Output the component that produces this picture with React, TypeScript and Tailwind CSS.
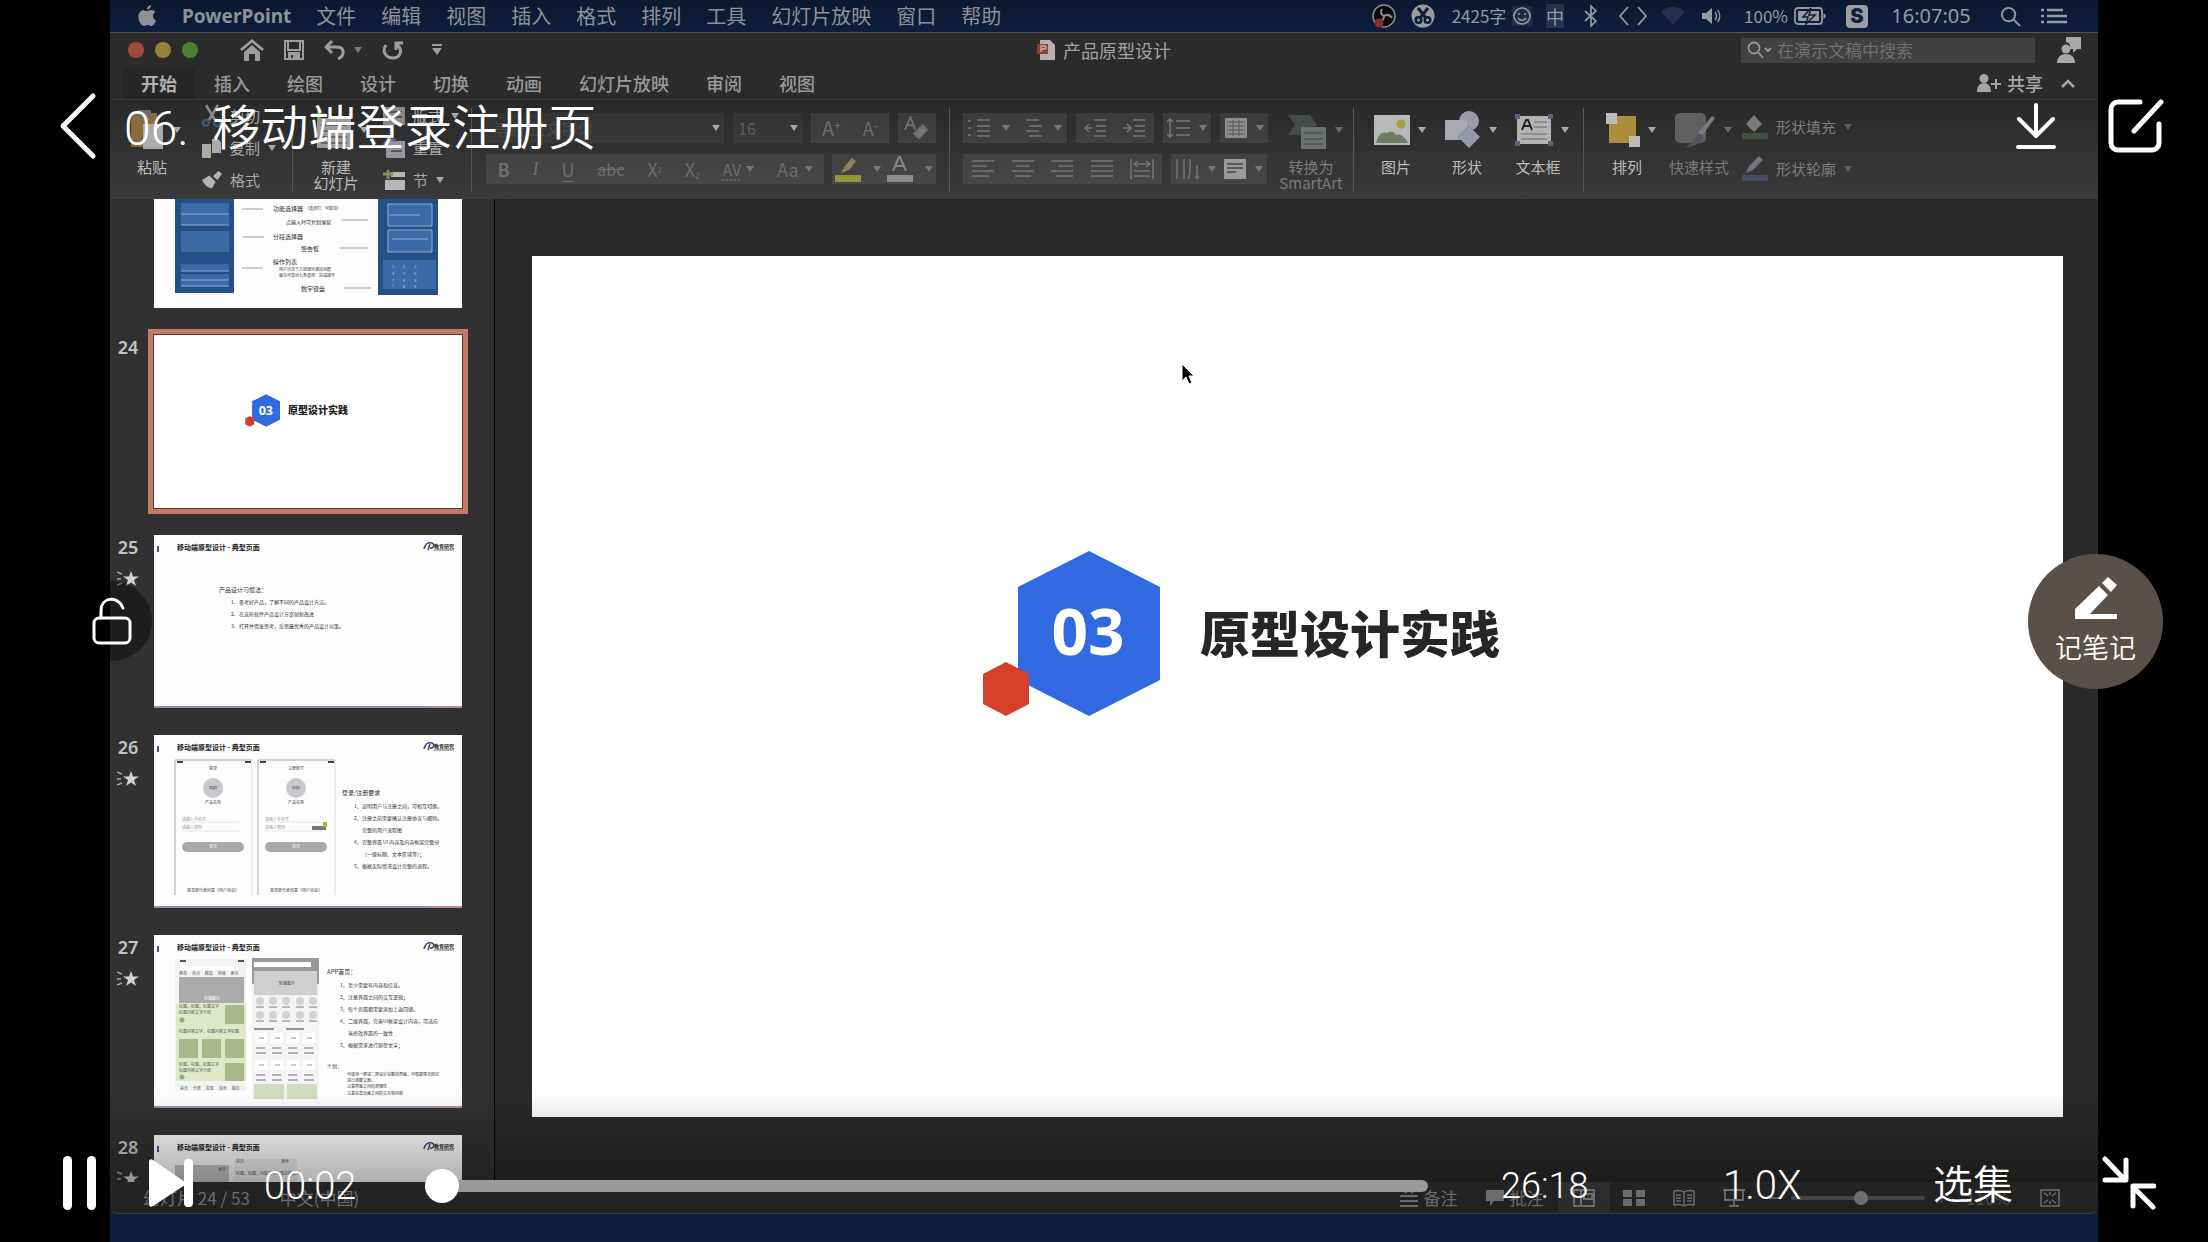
import React from "react";

type Kids = { children?: React.ReactNode };

const Caret = ({ tone = "text-[#a8a8a8]" }: { tone?: string }) => (
  <svg viewBox="0 0 8 6" className={`h-[6px] w-2 shrink-0 ${tone}`}>
    <path d="M0 0h8L4 6z" fill="currentColor" />
  </svg>
);

/* ---------- macOS menu bar ---------- */

const menus = ["文件", "编辑", "视图", "插入", "格式", "排列", "工具", "幻灯片放映", "窗口", "帮助"];

const Slot = ({ w, children }: Kids & { w: string }) => (
  <div className={`flex h-full items-center justify-center gap-[6px] ${w}`}>{children}</div>
);

function MenuBar() {
  return (
    <div className="flex h-8 shrink-0 items-center justify-between overflow-hidden bg-linear-to-b from-[#0b1931] to-[#0d1d3c] text-xl whitespace-nowrap text-[#8f9198]">
      <nav className="flex items-center gap-[25px] pl-[27px]">
        <button aria-label="Apple">
          <svg viewBox="0 0 20 24" className="h-6 w-5" fill="#8d9096">
            <path d="M14 1c.2 2.300-1.800 4.600-4 4.600C9.700 3.400 11.800 1.200 14 1zM10.300 7.100c.9 0 2-1.100 4-1.100 1.700 0 3.200.9 4 2.200-3.400 2-2.900 6.800.7 8.200-.9 2.600-2.800 5.600-4.800 5.600-1.500 0-2-.9-3.700-.9s-2.300.9-3.700.9C4.500 22 1.400 17.300 1.400 12.700 1.400 8.600 4 6.200 6.500 6.200c1.700 0 2.900.9 3.800.9z" />
          </svg>
        </button>
        <button className="font-['Noto_Sans'] text-[19px] font-bold">PowerPoint</button>
        {menus.map((m) => (
          <button key={m}>{m}</button>
        ))}
      </nav>
      <div className="flex h-full items-center pr-[21px] text-[#969aa2]">
        <Slot w="w-[38px]">
          <svg viewBox="0 0 24 24" className="size-6">
            <circle cx="12" cy="12" r="11" fill="#08080a" stroke="#8b8d92" strokeWidth="1.500" />
            <path d="M12 12c-3-1-4-4-2-7M12 12c3-2 6-1 8 2M12 12c0 3-2 6-6 6" fill="none" stroke="#8b8d92" strokeWidth="2" />
            <circle cx="7" cy="19" r="4.500" fill="#8c2c25" />
          </svg>
        </Slot>
        <Slot w="w-10">
          <svg viewBox="0 0 24 24" className="size-6">
            <circle cx="12" cy="12" r="11.500" fill="#989ba1" />
            <path d="M7 4l8 10M17 4L9 14" stroke="#0d1b36" strokeWidth="3" />
            <circle cx="7.500" cy="16" r="2.800" fill="none" stroke="#0d1b36" strokeWidth="2.500" />
            <circle cx="16.500" cy="16" r="2.800" fill="none" stroke="#0d1b36" strokeWidth="2.500" />
          </svg>
        </Slot>
        <Slot w="w-[98px]">
          <span className="text-[17px]">2425字</span>
          <span className="bg-white/8">
            <svg viewBox="0 0 20 20" className="size-5" fill="none" stroke="currentColor" strokeWidth="1.600">
              <circle cx="10" cy="10" r="8" />
              <path d="M7 7v2M13 7v2M6 12c2 3 6 3 8 0" />
            </svg>
          </span>
        </Slot>
        <Slot w="w-7">
          <span className="bg-white/10 text-lg leading-6">中</span>
        </Slot>
        <Slot w="w-11">
          <svg viewBox="0 0 14 22" className="h-[22px] w-[14px]" fill="none" stroke="currentColor" strokeWidth="1.700">
            <path d="M1 6l11 10-5 5V1l5 5L1 16" />
          </svg>
        </Slot>
        <Slot w="w-10">
          <svg viewBox="0 0 30 20" className="h-5 w-[30px]" fill="none" stroke="currentColor" strokeWidth="1.800">
            <path d="M10 1L2 10l8 9M20 1l8 9-8 9" />
          </svg>
        </Slot>
        <Slot w="w-10">
          <svg viewBox="0 0 26 20" className="h-5 w-[26px]" fill="#23304f">
            <path d="M13 19L1 6C8-1 18-1 25 6z" />
          </svg>
        </Slot>
        <Slot w="w-9">
          <svg viewBox="0 0 20 18" className="h-[18px] w-5" fill="currentColor">
            <path d="M1 6h4l6-5v16l-6-5H1z" />
            <path d="M14 5c2 2 2 6 0 8M16.500 3c3 3 3 9 0 12" fill="none" stroke="currentColor" strokeWidth="1.400" />
          </svg>
        </Slot>
        <Slot w="w-28">
          <span className="text-[17px]">100%</span>
          <svg viewBox="0 0 32 18" className="h-[18px] w-8">
            <rect x="1" y="1" width="27" height="16" rx="3" fill="none" stroke="currentColor" strokeWidth="1.800" />
            <rect x="4" y="4" width="21" height="10" fill="currentColor" />
            <path d="M29.500 6v6l2-1.500v-3z" fill="currentColor" />
            <path d="M17 1l-8 9h5l-2 7 9-9h-6z" fill="currentColor" stroke="#0d1b36" strokeWidth="1.500" />
          </svg>
        </Slot>
        <Slot w="w-8">
          <span className="grid h-[23px] w-[22px] place-items-center rounded-sm bg-[#9b9fa5] font-['Inter'] text-xl leading-5 font-black text-[#10203c]">S</span>
        </Slot>
        <Slot w="w-[116px]">
          <span className="font-['Noto_Sans']">16:07:05</span>
        </Slot>
        <Slot w="w-[42px]">
          <svg viewBox="0 0 22 22" className="size-[21px]" fill="none" stroke="currentColor" strokeWidth="2">
            <circle cx="9" cy="9" r="7" />
            <path d="M14 14l7 7" />
          </svg>
        </Slot>
        <Slot w="w-[46px]">
          <svg viewBox="0 0 26 16" className="h-4 w-[26px]" stroke="currentColor" strokeWidth="2.500">
            <path d="M0 2h3M0 8h3M0 14h3M6 2h16M6 8h20M6 14h20" />
          </svg>
        </Slot>
      </div>
    </div>
  );
}

/* ---------- window title and ribbon tabs ---------- */

const tabs = ["开始", "插入", "绘图", "设计", "切换", "动画", "幻灯片放映", "审阅", "视图"];

function TitleBar() {
  return (
    <div className="grid h-[34px] shrink-0 grid-cols-3 items-center text-[#9d9d9d]">
      <div className="flex items-center pl-[18px]">
        <div className="flex gap-[11px]">
          <span className="size-4 rounded-full bg-[#a2473c]" />
          <span className="size-4 rounded-full bg-[#9b8038]" />
          <span className="size-4 rounded-full bg-[#4a8130]" />
        </div>
        <div className="flex items-center gap-5 pl-[42px]">
          <button aria-label="主页">
            <svg viewBox="0 0 24 22" className="h-[22px] w-6" fill="currentColor">
              <path d="M12 0l12 10-2 2L12 3.500 2 12l-2-2z" />
              <path d="M12 6l8 7v9h-5v-7H9v7H4v-9z" />
            </svg>
          </button>
          <button aria-label="保存">
            <svg viewBox="0 0 20 20" className="size-5" fill="none" stroke="currentColor" strokeWidth="2">
              <path d="M1 1h18v18H1z" />
              <path d="M4 1v9h12V1" />
              <path d="M5 19v-6h10v6" fill="currentColor" />
              <path d="M8 15v3" stroke="#333" />
            </svg>
          </button>
          <button aria-label="撤消" className="flex items-center gap-[8px]">
            <svg viewBox="0 0 22 20" className="h-5 w-[22px]" fill="none" stroke="currentColor" strokeWidth="3">
              <path d="M8 1L2 7l6 6M2 7h11c8 0 8 9 1 12" />
            </svg>
            <Caret tone="text-[#777]" />
          </button>
          <button aria-label="恢复">
            <svg viewBox="0 0 22 20" className="h-5 w-[22px]" fill="none" stroke="currentColor" strokeWidth="3">
              <path d="M4 5c-5 7 1 13 7 13 8 0 10-9 4-13M14 10V3h7" />
            </svg>
          </button>
          <button aria-label="自定义" className="pl-2">
            <svg viewBox="0 0 10 12" className="h-3 w-[10px]" fill="currentColor">
              <path d="M0 0h10v2H0zM0 4h10L5 11z" />
            </svg>
          </button>
        </div>
      </div>
      <div className="flex items-center justify-center gap-2 text-lg text-[#a3a3a3]">
        <svg viewBox="0 0 18 20" className="h-5 w-[18px]">
          <path d="M3 0h10l5 5v15H3z" fill="#b5b0ae" />
          <path d="M0 4h11v10H0z" fill="#93402f" />
          <path d="M4 12V6h3c3 0 3 3 0 3H4" fill="none" stroke="#c9b4ae" strokeWidth="1.300" />
        </svg>
        产品原型设计
      </div>
      <div className="flex items-center justify-end gap-[22px] pr-[17px]">
        <label className="flex h-[25px] w-[294px] items-center gap-1 bg-[#414141] pl-[6px]">
          <svg viewBox="0 0 26 18" className="h-[18px] w-[26px] shrink-0" fill="none" stroke="#999" strokeWidth="1.800">
            <circle cx="7" cy="7" r="5.500" />
            <path d="M11 11l5 6M18 7l3 3 3-3" />
          </svg>
          <input aria-label="搜索" placeholder="在演示文稿中搜索" className="w-full bg-transparent text-[17px] outline-none placeholder:text-[#707070]" />
        </label>
        <button aria-label="用户">
          <svg viewBox="0 0 24 26" className="h-[26px] w-6" fill="#a9a9a9">
            <path d="M9 0h15v12h-4l-4 4v-4h-3c1-5-1-6-4-7z" />
            <circle cx="9" cy="12" r="4.500" />
            <path d="M0 26c0-6 4-9 9-9s9 3 9 9z" />
          </svg>
        </button>
      </div>
    </div>
  );
}

function TabRow() {
  return (
    <div className="flex h-8 shrink-0 items-center justify-between pr-[23px] pl-[13px] text-lg text-[#999]">
      <div className="flex gap-px">
        {tabs.map((t, i) => (
          <button key={t} className={i === 0 ? "bg-[#262626] px-[18px] leading-8 font-bold text-[#b0b0b0]" : "px-[18px] leading-8 font-medium"}>
            {t}
          </button>
        ))}
      </div>
      <button className="flex items-center gap-[6px] font-medium text-[#a6a6a6]">
        <svg viewBox="0 0 24 18" className="h-[18px] w-6" fill="currentColor">
          <circle cx="7" cy="4.500" r="4.500" />
          <path d="M0 18c0-6 3-9 7-9s7 3 7 9zM18 5h2v4h4v2h-4v4h-2v-4h-4V9h4z" />
        </svg>
        共享
        <svg viewBox="0 0 14 9" className="ml-3 h-[9px] w-[14px]" fill="none" stroke="currentColor" strokeWidth="2.500">
          <path d="M1 8l6-6 6 6" />
        </svg>
      </button>
    </div>
  );
}

/* ---------- ribbon ---------- */

const Group = ({ w, children }: Kids & { w: string }) => (
  <div className={`relative flex h-full shrink-0 ${w}`}>
    {children}
    <span className="absolute top-2 right-0 h-[84px] w-px bg-[#585858]" />
  </div>
);

const BigButton = ({ label, w, dim, children }: Kids & { label: string; w: string; dim?: boolean }) => (
  <button className={`flex h-full flex-col items-center pt-[9px] text-[15px] leading-4 whitespace-pre-line ${w} ${dim ? "text-[#7c7c7c]" : "text-[#bdbdbd]"}`}>
    <span className="mb-2 flex h-[42px] items-center gap-2 pl-2">
      {children}
      <Caret tone={dim ? "text-[#6b6b6b]" : "text-[#a8a8a8]"} />
    </span>
    {label}
  </button>
);

const SmallButton = ({ label, caret, children }: Kids & { label: string; caret?: boolean }) => (
  <button className="flex h-8 items-center gap-2 text-[15px] text-[#a9a9a9]">
    {children}
    {label}
    {caret && <Caret />}
  </button>
);

const Panel = ({ w, children }: Kids & { w: string }) => (
  <div className={`flex h-[30px] items-center justify-around bg-white/8 ${w}`}>{children}</div>
);

const Lines = ({ d }: { d: string }) => (
  <svg viewBox="0 0 24 20" className="h-5 w-6" fill="none" stroke="#757575" strokeWidth="1.500">
    <path d={d} />
  </svg>
);

const dimCaret = "text-[#767676]";

function FontGroup() {
  return (
    <Group w="w-[478px]">
      <div className="flex flex-col gap-[11px] pt-[13px] pl-[14px] text-[#6d6d6d]">
        <div className="flex gap-[9px]">
          <label className="flex h-[30px] w-[238px] items-center bg-white/4 pr-1">
            <select aria-label="字体" className="w-full appearance-none bg-transparent pl-2 text-base text-[#484848] outline-none">
              <option>等线 正文字体</option>
            </select>
            <Caret />
          </label>
          <label className="flex h-[30px] w-[69px] items-center bg-white/4 pr-1">
            <select aria-label="字号" className="w-full appearance-none bg-transparent pl-[5px] text-base text-[#5e5e5e] outline-none">
              <option>16</option>
            </select>
            <Caret />
          </label>
          <Panel w="w-[78px]">
            <button className="text-xl">A<sup className="text-xs">+</sup></button>
            <button className="text-lg">A<sup className="text-xs">-</sup></button>
          </Panel>
          <Panel w="w-[38px]">
            <button aria-label="清除格式">
              <svg viewBox="0 0 28 26" className="h-6 w-[26px]" fill="none" stroke="#6f6f6f" strokeWidth="2">
                <path d="M1 15L7 1l5 14M3 10h8" />
                <path d="M11 19l9-9 5 5-9 9z" fill="#777" />
              </svg>
            </button>
          </Panel>
        </div>
        <div className="flex gap-2">
          <Panel w="w-[338px]">
            <button className="text-lg font-bold">B</button>
            <button className="font-['Liberation_Serif'] text-lg italic">I</button>
            <button className="text-lg underline underline-offset-4">U</button>
            <button className="text-base line-through">abc</button>
            <button className="text-lg">X<sup className="text-[8px]">2</sup></button>
            <button className="text-lg">X<sub className="text-[8px]">2</sub></button>
            <button className="flex items-center gap-[5px] text-base underline decoration-dotted underline-offset-4">AV<Caret tone={dimCaret} /></button>
            <button className="flex items-center gap-[6px] text-lg">Aa<Caret tone={dimCaret} /></button>
          </Panel>
          <Panel w="w-[104px]">
            <button aria-label="突出显示" className="flex items-center gap-3">
              <svg viewBox="0 0 26 26" className="size-[26px]">
                <path d="M6 17l4-7 7-8 4 3-6 8-6 3z" fill="#8d8653" />
                <path d="M0 19h26v7H0z" fill="#94943f" />
              </svg>
              <Caret tone={dimCaret} />
            </button>
            <button aria-label="字体颜色" className="flex items-center gap-3">
              <svg viewBox="0 0 26 26" className="size-[26px]">
                <path d="M6 15l6-14h1l6 14M8 10h9" fill="none" stroke="#858585" strokeWidth="2" />
                <path d="M0 19h26v7H0z" fill="#8e8e8e" />
              </svg>
              <Caret tone={dimCaret} />
            </button>
          </Panel>
        </div>
      </div>
    </Group>
  );
}

function ParagraphGroup() {
  return (
    <Group w="w-[404px]">
      <div className="flex flex-col gap-[11px] pt-[13px] pl-[13px]">
        <div className="flex gap-[9px]">
          <Panel w="w-[104px]">
            <Lines d="M0 3h3M0 10h3M0 17h3M9 2h13M9 8h13M9 13h13M9 18h13" />
            <Caret tone={dimCaret} />
            <Lines d="M6 2h13M9 8h13M6 13h13M9 18h13" />
            <Caret tone={dimCaret} />
          </Panel>
          <Panel w="w-[78px]">
            <Lines d="M10 2h12M12 8h10M12 13h10M10 18h12M8 10H1M5 6l-4 4 4 4" />
            <Lines d="M10 2h12M12 8h10M12 13h10M10 18h12M0 10h8M4 6l4 4-4 4" />
          </Panel>
          <Panel w="w-12">
            <Lines d="M3 1v18M0 4l3-3 3 3M0 16l3 3 3-3M9 3h14M9 10h14M9 17h14" />
            <Caret tone={dimCaret} />
          </Panel>
          <Panel w="w-12">
            <svg viewBox="0 0 22 20" className="h-5 w-[22px]">
              <path d="M0 0h22v20H0z" fill="#8f8f8f" />
              <path d="M2 4h18M2 8h18M2 12h18M2 16h18M8 2v16M14 2v16" stroke="#555" />
            </svg>
            <Caret tone={dimCaret} />
          </Panel>
        </div>
        <div className="flex gap-[9px]">
          <Panel w="w-[199px]">
            <Lines d="M1 2h22M1 7h15M1 12h22M1 17h17" />
            <Lines d="M1 2h22M5 7h14M1 12h22M4 17h16" />
            <Lines d="M1 2h22M8 7h15M1 12h22M6 17h17" />
            <Lines d="M1 2h22M1 7h22M1 12h22M1 17h22" />
            <Lines d="M1 0v20M23 0v20M4 5h16M8 2L4 5l4 3M16 2l4 3-4 3M4 12h16M4 17h16" />
          </Panel>
          <Panel w="w-[96px]">
            <Lines d="M2 0v20M9 0v20M15 0v14l-2 6M22 6v13M20 17l2 3 2-3" />
            <Caret tone={dimCaret} />
            <svg viewBox="0 0 22 20" className="h-5 w-[22px]">
              <path d="M0 0h22v20H0z" fill="#9a9a9a" />
              <path d="M3 5h16M3 9h16M3 13h9" stroke="#444" strokeWidth="1.500" />
            </svg>
            <Caret tone={dimCaret} />
          </Panel>
        </div>
      </div>
      <BigButton label={"转换为\nSmartArt"} w="w-[86px]" dim>
        <svg viewBox="0 0 40 42" className="h-[42px] w-10">
          <path d="M1 6h22l7 10-7 10H1l7-10z" fill="#454b48" />
          <path d="M14 18h25v22H14z" fill="#6c716e" />
          <path d="M17 24h19M17 30h19M17 35h19" stroke="#4f4f4f" strokeWidth="1.500" />
        </svg>
      </BigButton>
    </Group>
  );
}

function Ribbon() {
  return (
    <div className="flex h-[100px] shrink-0 overflow-hidden border-t border-[#383838] bg-linear-to-b from-[#292929] to-[#3a3a3a]">
      <Group w="w-[183px]">
        <BigButton label="粘贴" w="w-[84px]">
          <svg viewBox="0 0 34 40" className="h-10 w-[34px]">
            <path d="M0 3h26v34H0z" fill="#8a6b3d" />
            <path d="M6 0h14v8H6z" fill="#6f6a66" />
            <path d="M12 14h20v25H12z" fill="#aaa" />
          </svg>
        </BigButton>
        <div className="flex flex-col pl-2">
          <SmallButton label="剪切">
            <svg viewBox="0 0 20 24" className="h-6 w-5" fill="none" stroke="#8a8a8a" strokeWidth="2.500">
              <path d="M4 1l9 15M16 1L7 16" />
              <circle cx="4" cy="19" r="3" stroke="#40566c" />
              <circle cx="15" cy="19" r="3" stroke="#40566c" />
            </svg>
          </SmallButton>
          <SmallButton label="复制" caret>
            <svg viewBox="0 0 20 20" className="size-5" fill="#aaa">
              <path d="M0 6h9v14H0zM10 1h6l3 3v11h-9z" />
            </svg>
          </SmallButton>
          <SmallButton label="格式">
            <svg viewBox="0 0 22 20" className="h-5 w-5" fill="#b3b3b3">
              <path d="M0 10l8-5 7 7-4 7c-4 0-8-3-11-9zM12 6l6-6 4 3-5 7z" />
            </svg>
          </SmallButton>
        </div>
      </Group>
      <Group w="w-[179px]">
        <BigButton label={"新建\n幻灯片"} w="w-[86px]">
          <svg viewBox="0 0 40 40" className="h-10 w-10">
            <path d="M5 8h34v30H5z" fill="#9b9b9b" />
            <path d="M9 15h26M9 21h26M9 27h26M9 33h26" stroke="#666" strokeWidth="2" />
            <path d="M0 5h14M7 0v12" stroke="#8fa060" strokeWidth="3" />
          </svg>
        </BigButton>
        <div className="flex flex-col pl-1">
          <SmallButton label="版式" caret>
            <svg viewBox="0 0 22 18" className="h-[18px] w-[22px]">
              <path d="M0 0h22v18H0z" fill="#888" />
              <path d="M3 5h16M3 10h7M12 10h7" stroke="#555" strokeWidth="2" />
            </svg>
          </SmallButton>
          <SmallButton label="重置">
            <svg viewBox="0 0 22 20" className="h-5 w-[22px]">
              <path d="M3 3h19v17H3z" fill="#95959f" />
              <path d="M8 9h11M8 13h11" stroke="#555" strokeWidth="2" />
              <path d="M1 8c1-6 8-8 12-5" fill="none" stroke="#5d5d86" strokeWidth="3" />
            </svg>
          </SmallButton>
          <SmallButton label="节" caret>
            <svg viewBox="0 0 22 20" className="h-5 w-[22px]">
              <path d="M8 2h14v5H8zM2 10h20v10H2z" fill="#b8b8b8" />
              <path d="M0 4h10M5 0v9" stroke="#7e9155" strokeWidth="3" />
            </svg>
          </SmallButton>
        </div>
      </Group>
      <FontGroup />
      <ParagraphGroup />
      <Group w="w-[230px]">
        <div className="flex pl-[6px]">
          <BigButton label="图片" w="w-[72px]">
            <svg viewBox="0 0 36 30" className="h-[30px] w-9">
              <path d="M0 0h36v30H0z" fill="#b9b9b9" />
              <path d="M2 28c2-8 6-12 11-10 3-2 7-2 9 2 5-2 9 2 12 8z" fill="#6d7d62" />
              <circle cx="27" cy="9" r="4.500" fill="#a9a13f" />
            </svg>
          </BigButton>
          <BigButton label="形状" w="w-[70px]">
            <svg viewBox="0 0 36 38" className="h-[38px] w-9">
              <circle cx="24" cy="10" r="10" fill="#9b9ba3" />
              <path d="M0 9h22v20H0z" fill="#a9a9b1" />
              <path d="M24 15l11 11-11 11-11-11z" fill="#9999ac" stroke="#666" strokeWidth=".5" />
            </svg>
          </BigButton>
          <BigButton label="文本框" w="w-[72px]">
            <svg viewBox="0 0 38 32" className="h-8 w-[38px]">
              <path d="M2 2h34v28H2z" fill="#b3b3b3" />
              <path d="M7 16l4-10h2l4 10M9 12h6" fill="none" stroke="#222" strokeWidth="2" />
              <path d="M19 8h13M19 13h13M6 20h26M6 25h26" stroke="#666" />
              <path d="M0 0h5v5H0zM33 0h5v5h-5zM0 27h5v5H0zM33 27h5v5h-5z" fill="#5b6280" />
            </svg>
          </BigButton>
        </div>
      </Group>
      <div className="flex h-full pl-[6px]">
        <BigButton label="排列" w="w-[74px]">
          <svg viewBox="0 0 34 34" className="size-[34px]">
            <path d="M3 3h27v27H3z" fill="#ad8c3c" />
            <path d="M0 0h11v11H0zM23 23h11v11H23z" fill="#bcbcbc" />
          </svg>
        </BigButton>
        <BigButton label="快速样式" w="w-[70px]" dim>
          <svg viewBox="0 0 42 36" className="h-9 w-[42px]">
            <rect x="1" y="1" width="31" height="30" rx="5" fill="#606060" />
            <path d="M41 6L28 24l-4-3L38 4z" fill="#7b7b7b" />
            <path d="M27 22c4 4-2 13-15 13 8-4 8-12 15-13z" fill="#4d5566" />
          </svg>
        </BigButton>
        <div className="flex flex-col gap-[10px] pt-[11px] pl-2 text-[15px] text-[#7d7d7d]">
          <button className="flex h-8 items-center gap-2">
            <svg viewBox="0 0 26 26" className="size-[26px]">
              <path d="M12 1l8 9-8 8-8-8z" fill="#7a7a7a" />
              <path d="M0 19h26v6H0z" fill="#3f5144" />
            </svg>
            形状填充
            <Caret tone="text-[#606060]" />
          </button>
          <button className="flex h-8 items-center gap-2">
            <svg viewBox="0 0 26 26" className="size-[26px]">
              <path d="M4 17l3-7L17 0l4 4-10 10z" fill="#74747c" />
              <path d="M0 19h26v6H0z" fill="#454d6b" />
            </svg>
            形状轮廓
            <Caret tone="text-[#606060]" />
          </button>
        </div>
      </div>
    </div>
  );
}

/* ---------- slides ---------- */

const Hexagons = ({ className }: { className: string }) => (
  <svg viewBox="0 0 178 165" className={className}>
    <path d="M107 0l71 36v93l-71 36-71-36V36z" fill="#3069e0" />
    <path d="M24 111l23 12v30l-23 12-23-12v-30z" fill="#d63f2c" />
    <text x="106" y="104" textAnchor="middle" fill="#fff" className="font-['Noto_Sans'] text-[64px] font-bold">03</text>
  </svg>
);

function ThumbHeader() {
  return (
    <g>
      <path d="M3 11h2v6H3z" fill="#4c5188" />
      <text x="23" y="15" fill="#222" className="text-[7px] font-bold">移动端原型设计 - 典型页面</text>
      <path d="M270 14c1-5 4-7 8-6 3 1 2 6-2 5M274 15l2-6" fill="none" stroke="#3c4475" strokeWidth="1.500" />
      <text x="280" y="13" fill="#222" className="text-[5px] font-bold">教育研究</text>
      <path d="M280 15h20" stroke="#666" strokeWidth="1" />
      <path d="M0 171h275v2H0z" fill="#8f92ac" />
      <path d="M275 171h33v2h-33z" fill="#b98b92" />
    </g>
  );
}

const TextLines = ({ x, rows, className }: { x: number; rows: [number, string][]; className: string }) => (
  <g fill="#333" className={className}>
    {rows.map(([y, t]) => (
      <text key={y} x={x} y={y}>{t}</text>
    ))}
  </g>
);

function Thumb23() {
  return (
    <g>
      <path d="M21 0h59v158H21zM224 0h60v160h-60z" fill="#245085" />
      <path d="M27 68h48v22H27zM27 96h48v21H27zM27 129h48v7H27zM27 139h48v12H27zM229 125h53v29h-53zM234 69h44v22h-44zM234 95h44v22h-44z" fill="#3a6ba6" />
      <path d="M27 90h48M27 79h48M27 136h48M27 145h48M27 151h48M234 69h44v22h-44zM234 95h44v22h-44zM236 80h30M238 104h36" fill="none" stroke="#8fb2d8" strokeWidth="1" />
      <path d="M88 74h21M89 102h21M88 133h21M187 85h27M186 113h28M190 153h27" stroke="#a79aa0" strokeWidth="1" />
      <TextLines x={119} className="text-[6px]" rows={[[76, "功能选择器"], [104, "分段选择器"], [129, "操作列表"]]} />
      <TextLines x={151} className="text-[4px]" rows={[[75, "（选择时、可取消）"]]} />
      <TextLines x={132} className="text-[5px]" rows={[[89, "点输入时可复制弹窗"]]} />
      <TextLines x={147} className="text-[6px]" rows={[[116, "警告框"], [156, "数字键盘"]]} />
      <TextLines x={125} className="text-[4px]" rows={[[136, "用户点击下方按钮可调出功能"], [142, "最多可显示七条选项、完成操作"]]} />
      <g fill="#b9cde6" className="text-[4px]">
        <text x="238" y="133">1　　 2　　 3</text>
        <text x="238" y="140">4　　 5　　 6</text>
        <text x="238" y="147">7　　 8　　 9</text>
        <text x="238" y="153">*　　 0　　 #</text>
      </g>
    </g>
  );
}

function Thumb25() {
  return (
    <g>
      <ThumbHeader />
      <TextLines x={65} className="text-[6px]" rows={[[57, "产品设计习惯法："]]} />
      <TextLines x={77} className="text-[5px]" rows={[[69, "1."], [81, "2."], [93, "3."]]} />
      <TextLines x={85} className="text-[5px]" rows={[[69, "参考好产品，了解不同的产品设计方法。"], [81, "在这些软件产品设计方案创新改进"], [93, "打开并借鉴思考，反思最优秀的产品设计对策。"]]} />
    </g>
  );
}

function Phone({ x, title }: { x: number; title: string }) {
  return (
    <g>
      <path d={`M${x} 160V25h77`} fill="none" stroke="#a9a9a9" strokeWidth="1" />
      <path d={`M${x + 77} 25v135`} stroke="#ddd" strokeWidth="1" />
      <path d={`M${x + 2} 27h6M${x + 70} 27h6`} stroke="#444" strokeWidth="2" />
      <circle cx={x + 38} cy={53} r={10} fill="#c9c9cd" />
      <rect x={x + 7} y={107} width={62} height={10} rx={5} fill="#a9a9a9" />
      <path d={`M${x + 7} 87h57M${x + 7} 96h57`} stroke="#e6e6e6" strokeWidth="1" />
      <g fill="#444" textAnchor="middle" className="text-[4px]">
        <text x={x + 38} y={35}>{title}</text>
        <text x={x + 38} y={54}>logo</text>
        <text x={x + 38} y={69}>产品名称</text>
        <text x={x + 38} y={157}>登录即代表同意《用户协议》</text>
      </g>
      <g fill="#999" className="text-[4px]">
        <text x={x + 7} y={86}>请输入手机号</text>
        <text x={x + 7} y={94}>请输入密码</text>
      </g>
      <text x={x + 38} y={113} fill="#eee" textAnchor="middle" className="text-[4px]">登录</text>
    </g>
  );
}

function Thumb26() {
  return (
    <g>
      <ThumbHeader />
      <Phone x={21} title="登录" />
      <Phone x={104} title="注册账号" />
      <path d="M158 91h14v4h-14z" fill="#777" />
      <path d="M169 87h4v5h-4z" fill="#b5ad3d" />
      <TextLines x={188} className="text-[6px]" rows={[[60, "登录/注册要求"]]} />
      <TextLines x={200} className="text-[5px]" rows={[[73, "1、"], [85, "2、"], [109, "4、"], [133, "5、"]]} />
      <TextLines x={208} className="text-[5px]" rows={[[73, "说明用户与注册之间，可相互切换。"], [85, "注册之前需要确认注册协议与细则。"], [97, "完整的用户流程图"], [109, "完整界面 UI 内容及内容框架完整分"], [121, "（一级标题、文本区域等）；"], [133, "根据实际情况设计完整的流程。"]]} />
    </g>
  );
}

const grid = (cols: number[], rows: number[]) => cols.flatMap((x) => rows.map((y) => [x, y] as const));

function Thumb27() {
  return (
    <g>
      <ThumbHeader />
      <path d="M21 24h71v132H21z" fill="#f3f3f3" />
      <path d="M22 68h70v78H22z" fill="#dfe9c9" />
      <path d="M25 42h65v26H25z" fill="#ababab" />
      <path d="M71 70h19v19H71zM25 104h19v19H25zM48 104h19v19H48zM71 104h19v19H71zM71 128h19v18H71z" fill="#a8b98e" />
      <path d="M26 26h6M84 26h6" stroke="#555" strokeWidth="2" />
      <path d="M26 31h54v4H26z" fill="#fff" />
      <g fill="#555" className="text-[4px]">
        <text x="25" y="40">推荐　 热点　 精选　 视频　 更多</text>
        <text x="50" y="65" fill="#fff">轮播图片</text>
        <text x="25" y="73">标题，标题，标题文字</text>
        <text x="25" y="79">标题内容文字介绍</text>
        <text x="25" y="98">标题内容文字，标题内容文字标题</text>
        <text x="25" y="131">标题，标题，标题文字</text>
        <text x="25" y="137">标题内容文字介绍</text>
        <text x="26" y="155">首页　 分类　 发现　 消息　 我的</text>
      </g>
      <circle cx="28" cy="85" r="2.500" fill="#9aad7e" />
      <circle cx="28" cy="142" r="2.500" fill="#9aad7e" />
      <path d="M98 23h67v141H98z" fill="#f4f4f4" />
      <path d="M98 23h67v26H98z" fill="#999" />
      <path d="M100 27h57v5h-57z" fill="#fff" />
      <path d="M100 36h63v24h-63z" fill="#cfcfcf" />
      <text x="125" y="50" fill="#444" className="text-[4px]">轮播图片</text>
      {grid([106, 119, 132, 146, 159], [66, 80]).map(([x, y]) => (
        <g key={`${x}-${y}`}>
          <circle cx={x} cy={y} r={4} fill="#d3d3d3" />
          <path d={`M${x - 4} ${y + 6}h8`} stroke="#a5a5a5" strokeWidth="1.500" />
        </g>
      ))}
      {grid([107, 123, 139, 155], [103, 130]).map(([x, y]) => (
        <g key={`${x}-${y}`}>
          <path d={`M${x - 6} ${y - 5}h12v10h-12z`} fill="#fff" />
          <path d={`M${x - 2} ${y}h5`} stroke="#999" />
          <path d={`M${x - 5} ${y + 10}h9M${x - 5} ${y + 15}h10`} stroke="#999" strokeWidth="1.500" />
        </g>
      ))}
      <path d="M100 94h20M132 94h18" stroke="#777" strokeWidth="1.500" />
      <path d="M100 149h30v15h-30zM133 149h30v15h-30z" fill="#d0dcbf" />
      <TextLines x={173} className="text-[6px]" rows={[[39, "APP首页："]]} />
      <TextLines x={186} className="text-[5px]" rows={[[52, "1、"], [64, "2、"], [76, "3、"], [88, "4、"], [112, "5、"]]} />
      <TextLines x={194} className="text-[5px]" rows={[[52, "至少需要有内容和信息。"], [64, "注意界面之间的交互逻辑；"], [76, "每个页面都需要添加上返回键。"], [88, "二级界面，完善UI框架设计内容，可适应"], [100, "当修改界面的一致性"], [112, "根据需求进行原型文字；"]]} />
      <TextLines x={173} className="text-[5px]" rows={[[133, "个别："]]} />
      <TextLines x={193} className="text-[4px]" rows={[[141, "可使用一屏或二屏设计完整的界面，可根据情况而定"], [147, "进行调整文案。"], [153, "注意界面之间的逻辑性"], [160, "注意完善页面之间的交互和内容"]]} />
    </g>
  );
}

function Thumb28() {
  return (
    <g>
      <ThumbHeader />
      <path d="M21 30h54v20H21z" fill="#c4c4c4" />
      <path d="M80 24h63v26H80z" fill="#f0f0f0" />
      <g fill="#555" className="text-[4px]">
        <text x="64" y="36">更多</text>
        <text x="82" y="28">首页　　　　　　　　　 搜索</text>
        <text x="82" y="40">标题，标题，内容文字标题内容文字</text>
      </g>
    </g>
  );
}

const slides: { n: number; star: boolean; art: React.ReactNode }[] = [
  { n: 23, star: false, art: <Thumb23 /> },
  { n: 24, star: false, art: null },
  { n: 25, star: true, art: <Thumb25 /> },
  { n: 26, star: true, art: <Thumb26 /> },
  { n: 27, star: true, art: <Thumb27 /> },
  { n: 28, star: true, art: <Thumb28 /> },
];

function Sidebar() {
  return (
    <aside className="w-[385px] shrink-0 overflow-hidden border-r border-black bg-[#313131]">
      <ul className="-mt-16 flex flex-col gap-[27px]">
        {slides.map((s) => (
          <li key={s.n} className="flex h-[173px] shrink-0">
            <div className="flex w-11 shrink-0 flex-col items-center gap-3 pr-2 font-['Noto_Sans'] text-lg leading-6 font-semibold text-[#c6c6c6]">
              {s.n}
              {s.star && (
                <svg viewBox="0 0 22 16" className="h-4 w-[22px]" fill="#d4d4d4">
                  <path d="M14 0l2 5.500h6l-5 3.500 2 6-5-3.500L9 15l2-6-5-3.500h6z" />
                  <path d="M0 1l5 2M0 8h4M0 14l5-2" stroke="#aaa" strokeWidth="1.500" />
                </svg>
              )}
            </div>
            {s.art ? (
              <svg viewBox="0 0 308 173" className="h-[173px] w-[308px] bg-[#fdfdfd]">
                {s.art}
              </svg>
            ) : (
              <div className="flex w-[308px] items-start gap-2 bg-white pt-[59px] pl-[91px] ring-6 ring-[#c27b68] outline-1 outline-[#6b3328]">
                <Hexagons className="h-[33px] w-[35px]" />
                <span className="pt-2 text-[10px] leading-4 font-black text-[#222]">原型设计实践</span>
              </div>
            )}
          </li>
        ))}
      </ul>
    </aside>
  );
}

function Stage() {
  return (
    <main className="min-w-0 flex-1 bg-[#292929] pt-[57px] pr-[35px] pl-[37px]">
      <div className="relative flex aspect-video w-full items-start gap-10 bg-white pt-[19.300%] pl-[29.400%]">
        <Hexagons className="h-[165px] w-[178px] shrink-0" />
        <h1 className="pt-[48px] text-[50px] leading-[64px] font-black whitespace-nowrap text-[#262626]">原型设计实践</h1>
        <svg viewBox="0 0 14 22" className="absolute top-[12.400%] left-[42.400%] h-[22px] w-[14px]">
          <path d="M1 1v17l4-4 3 7 3-1-3-7h5z" fill="#000" stroke="#fff" strokeWidth="1" />
        </svg>
      </div>
    </main>
  );
}

function StatusBar() {
  return (
    <div className="flex h-8 shrink-0 items-center justify-between rounded-b-lg border-b border-[#5b5b5b] bg-[#333] pr-[38px] pl-[33px] text-[17px] whitespace-nowrap text-[#a0a0a0]">
      <div className="flex gap-[30px]">
        <span>幻灯片 24 / 53</span>
        <span>中文(中国)</span>
      </div>
      <div className="flex h-full items-center">
        <button className="flex items-center gap-[6px] pr-7">
          <svg viewBox="0 0 18 18" className="size-[18px]" fill="none" stroke="currentColor" strokeWidth="2">
            <path d="M0 7h18M0 12h18M0 17h18M5 4l4-4 4 4" />
          </svg>
          备注
        </button>
        <button className="flex items-center gap-[6px] pr-[14px]">
          <svg viewBox="0 0 18 16" className="h-4 w-[18px]" fill="currentColor">
            <path d="M0 0h18v11H8l-4 5v-5H0z" />
          </svg>
          批注
        </button>
        <button aria-label="普通视图" className="grid h-full w-[52px] place-items-center bg-[#424242]">
          <svg viewBox="0 0 22 18" className="h-[18px] w-[22px]" fill="none" stroke="currentColor" strokeWidth="2">
            <path d="M1 1h20v16H1zM8 1v16M11 5h8v5h-8z" />
          </svg>
        </button>
        <button aria-label="浏览" className="pl-[13px]">
          <svg viewBox="0 0 22 16" className="h-4 w-[22px]" fill="currentColor">
            <path d="M0 0h9v7H0zM13 0h9v7h-9zM0 9h9v7H0zM13 9h9v7h-9z" />
          </svg>
        </button>
        <button aria-label="阅读视图" className="pl-7">
          <svg viewBox="0 0 22 18" className="h-[18px] w-[22px]" fill="none" stroke="currentColor" strokeWidth="1.500">
            <path d="M1 2c4-1 7-1 10 1 3-2 6-2 10-1v14c-4-1-7-1-10 1-3-2-6-2-10-1zM11 3v14M3 6h5M3 9h5M3 12h5M14 6h5M14 9h5M14 12h5" />
          </svg>
        </button>
        <button aria-label="放映" className="pl-7">
          <svg viewBox="0 0 22 18" className="h-[18px] w-[22px]" fill="none" stroke="currentColor" strokeWidth="1.800">
            <path d="M0 1h22M2 1v10h18V1M11 11v6M6 17h10" />
          </svg>
        </button>
        <button aria-label="缩小" className="mr-3 ml-6 h-[2px] w-[10px] bg-[#888]" />
        <input
          type="range"
          aria-label="缩放"
          defaultValue={53}
          className="h-1 w-[134px] appearance-none rounded bg-[#666] [&::-webkit-slider-thumb]:size-[14px] [&::-webkit-slider-thumb]:appearance-none [&::-webkit-slider-thumb]:rounded-full [&::-webkit-slider-thumb]:bg-[#a2a2a2]"
        />
        <button aria-label="放大" className="pl-3 text-[#777]">+</button>
        <span className="pl-5 text-[#6f6f6f]">110%</span>
        <button aria-label="适应窗口" className="pl-[30px]">
          <svg viewBox="0 0 20 18" className="h-[18px] w-5" fill="none" stroke="currentColor" strokeWidth="1.500">
            <path d="M1 1h18v16H1zM4 4l4 3M16 4l-4 3M4 14l4-3M16 14l-4-3M10 3v3M10 12v3" />
          </svg>
        </button>
      </div>
    </div>
  );
}

/* ---------- player overlay ---------- */

function PlayerOverlay() {
  return (
    <div className="absolute inset-0 flex flex-col justify-between bg-linear-to-t from-black/40 via-black/30 via-5% to-transparent to-12% text-white">
      <header className="flex items-center pt-[88px] pr-[44px] pl-[59px]">
        <button aria-label="返回">
          <svg viewBox="0 0 38 70" className="h-[70px] w-[38px]" fill="none" stroke="#fff" strokeWidth="5" strokeLinecap="round" strokeLinejoin="round">
            <path d="M34 5L4 35l30 30" />
          </svg>
        </button>
        <h2 className="flex-1 pt-[6px] pl-[27px] font-[Roboto,'Noto_Sans_CJK_SC',sans-serif] text-5xl leading-[70px] font-[350]">06.&nbsp; 移动端登录注册页</h2>
        <button aria-label="下载" className="mr-[51px]">
          <svg viewBox="0 0 42 48" className="h-12 w-[42px]" fill="none" stroke="#fff" strokeWidth="4" strokeLinecap="round" strokeLinejoin="round">
            <path d="M21 3v31M4 17l17 17 17-17M3 45h36" />
          </svg>
        </button>
        <button aria-label="编辑">
          <svg viewBox="0 0 56 56" className="size-14" fill="none" stroke="#fff" strokeWidth="5" strokeLinecap="round" strokeLinejoin="round">
            <path d="M32 4H10a7 7 0 0 0-7 7v34a7 7 0 0 0 7 7h34a7 7 0 0 0 7-7V26M53 4L26 33" />
          </svg>
        </button>
      </header>

      <div className="flex items-center justify-between pr-[45px] pl-[72px]">
        <button aria-label="锁定" className="grid size-20 place-items-center rounded-full bg-black/40">
          <svg viewBox="0 0 40 48" className="h-12 w-10" fill="none" stroke="#fff" strokeWidth="3" strokeLinecap="round">
            <rect x="2" y="21" width="36" height="25" rx="5" />
            <path d="M9 21v-7c0-15 18-15 22-3" />
          </svg>
        </button>
        <button className="flex size-[135px] flex-col items-center justify-center gap-[10px] rounded-full bg-[#585049] text-[27px] leading-9 font-[350]">
          <svg viewBox="0 0 42 42" className="size-[42px]" fill="#fff">
            <path d="M33 0l9 8-6 7-9-9zM24 9l9 9-18 19h27v5H0V32z" />
          </svg>
          记笔记
        </button>
      </div>

      <footer className="flex h-[164px] items-center pt-[46px] pr-[52px] pl-[63px] font-[Roboto,'Noto_Sans_CJK_SC',sans-serif] font-[350]">
        <button aria-label="暂停" className="mr-[53px] flex gap-[15px]">
          <span className="h-[54px] w-[9px] rounded-full bg-white" />
          <span className="h-[54px] w-[9px] rounded-full bg-white" />
        </button>
        <button aria-label="下一集" className="mr-[71px]">
          <svg viewBox="0 0 44 50" className="h-[50px] w-11" fill="#fff">
            <path d="M0 3Q1 0 4 2l32 22q2 1 0 3L4 48q-3 2-4-1z" />
            <rect x="35" y="1" width="9" height="48" rx="4" />
          </svg>
        </button>
        <div className="flex min-w-0 flex-1 items-center pt-[6px]">
          <time className="w-24 text-[38px]">00:02</time>
          <input
            type="range"
            aria-label="播放进度"
            defaultValue={0}
            className="mr-[73px] ml-[65px] h-3 min-w-0 flex-1 appearance-none rounded-full bg-[#9a9a9a] [&::-webkit-slider-thumb]:size-[34px] [&::-webkit-slider-thumb]:appearance-none [&::-webkit-slider-thumb]:rounded-full [&::-webkit-slider-thumb]:bg-white"
          />
          <time className="mr-[130px] w-[92px] text-[36px]">26:18</time>
          <button className="mr-[130px] w-20 text-left text-[40px]">1.0X</button>
          <button className="mr-[89px] w-20 text-[40px]">选集</button>
        </div>
        <button aria-label="退出全屏">
          <svg viewBox="0 0 54 54" className="size-[54px]" fill="none" stroke="#fff" strokeWidth="5" strokeLinecap="round" strokeLinejoin="round">
            <path d="M3 3l20 21M3 24h21V4M51 51L31 31M31 50V30h21" />
          </svg>
        </button>
      </footer>
    </div>
  );
}

export default function App() {
  return (
    <div className="relative flex h-screen bg-black font-['Noto_Sans_CJK_SC',sans-serif]">
      <div className="mx-[110px] flex min-w-0 flex-1 flex-col bg-[#14315f]">
        <MenuBar />
        <div className="flex min-h-0 flex-1 flex-col rounded-b-lg border-t border-[#555] bg-[#2b2b2b]">
          <TitleBar />
          <TabRow />
          <Ribbon />
          <div className="flex min-h-0 flex-1">
            <Sidebar />
            <Stage />
          </div>
          <StatusBar />
        </div>
        <div className="h-7 shrink-0" />
      </div>
      <PlayerOverlay />
    </div>
  );
}
